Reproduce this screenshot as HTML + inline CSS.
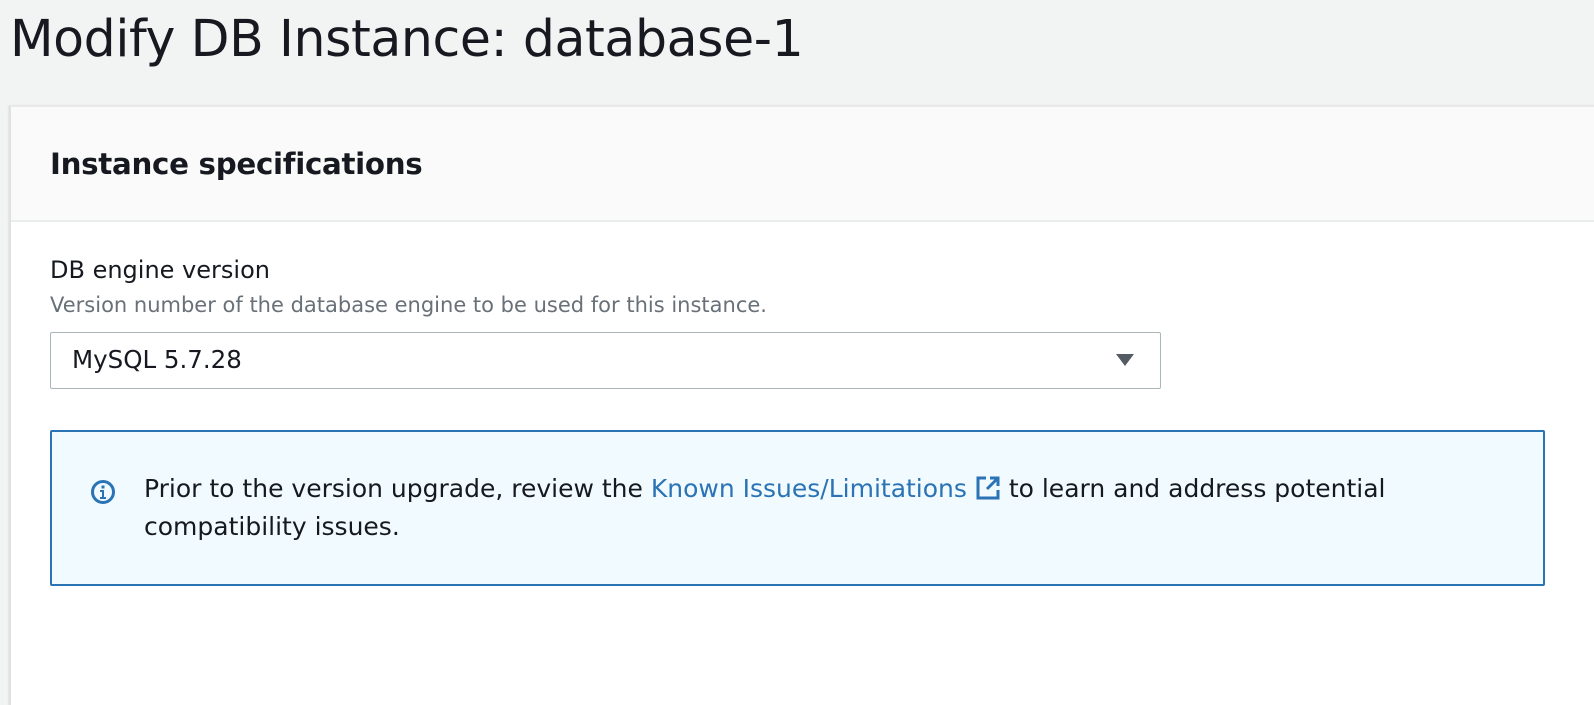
<!DOCTYPE html>
<html><head><style>
*{margin:0;padding:0;box-sizing:border-box}
body{width:1594px;height:622px;overflow:hidden;background:#f2f3f3;font-family:"DejaVu Sans","Liberation Sans",sans-serif;color:#16191f;position:relative}
.t{position:absolute;left:10px;top:7px;font-size:50.5px;line-height:64px;letter-spacing:-0.4px}
.panel{position:absolute;left:9px;top:105px;width:1600px;height:600px;background:#fff;border-left:2px solid #e0e2e2;border-top:2px solid #e8e9e9;box-shadow:0 1px 2px rgba(0,0,0,.15)}
.hd{height:115px;background:#fafafa;border-bottom:2px solid #eaeded}
.hd h2{position:absolute;left:39px;top:40px;font-size:29.3px;font-weight:bold;letter-spacing:-0.3px}
.l{position:absolute;left:39px;top:149px;font-size:24px}
.d{position:absolute;left:39px;top:186px;font-size:21px;color:#687078}
.sel{position:absolute;left:39px;top:225px;width:1111px;height:57px;border:1px solid #aab7b8;border-radius:2px;font-size:24.5px;padding:12px 0 0 21px}
.arr{position:absolute;right:26px;top:21px;width:0;height:0;border-left:9px solid transparent;border-right:9px solid transparent;border-top:12px solid #545b64}
.info{position:absolute;left:39px;top:323px;width:1495px;height:156px;border:2px solid #2a73b5;border-radius:2px;background:#f1faff;font-size:25px;line-height:38px;padding:38px 0 0 92px}
.info a{color:#2a73b5;text-decoration:none}
.ic{position:absolute;left:38px;top:47px}
</style></head><body>
<div class="t">Modify DB Instance: database-1</div>
<div class="panel">
<div class="hd"><h2>Instance specifications</h2></div>
<div class="l">DB engine version</div>
<div class="d">Version number of the database engine to be used for this instance.</div>
<div class="sel">MySQL 5.7.28<div class="arr"></div></div>
<div class="info">
<svg class="ic" width="26" height="26" viewBox="0 0 26 26"><circle cx="13" cy="13" r="10.5" fill="none" stroke="#2a73b5" stroke-width="3"/><rect x="11.5" y="6.5" width="3" height="3" fill="#2a73b5"/><path d="M10 11h4v7h2v2h-6v-2h2v-5h-2z" fill="#2a73b5"/></svg>
Prior to the version upgrade, review the <a>Known Issues/Limitations</a> <svg width="26" height="26" viewBox="0 0 26 26" style="vertical-align:-4px"><path d="M11 3H3v20h20v-8" fill="none" stroke="#2a73b5" stroke-width="3"/><path d="M15 3h8v8M23 3L12 14" fill="none" stroke="#2a73b5" stroke-width="3"/></svg> to learn and address potential<br>compatibility issues.
</div>
</div>
</body></html>
